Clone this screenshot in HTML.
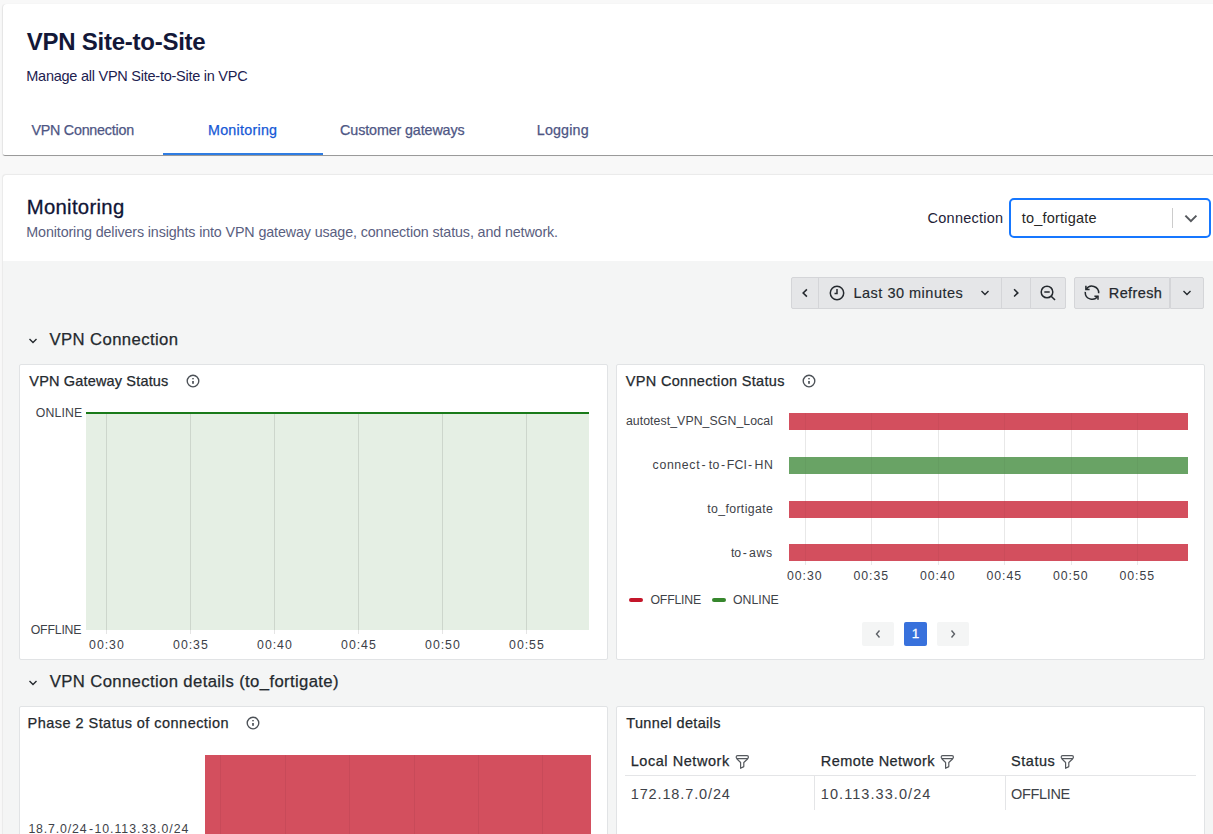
<!DOCTYPE html>
<html>
<head>
<meta charset="utf-8">
<style>
*{box-sizing:border-box;margin:0;padding:0}
html,body{width:1213px;height:834px;overflow:hidden;background:#f8f8f8;font-family:"Liberation Sans",sans-serif}
.a{position:absolute;white-space:nowrap;line-height:1}
#hdr{position:absolute;left:3px;top:4px;width:1220px;height:152px;background:#fff;border-radius:4px 0 0 2px;box-shadow:-1px 0 1px rgba(0,0,0,.08);border-bottom:1px solid #9a9a9a}
#mon{position:absolute;left:3px;top:175px;width:1220px;height:700px;background:#f4f5f5;border-radius:4px 0 0 0;box-shadow:-1px -1px 1px rgba(0,0,0,.06)}
#monhead{position:absolute;left:0;top:0;width:1220px;height:86px;background:#fff;border-radius:4px 0 0 0}
.panel{position:absolute;background:#fff;border:1px solid #e1e3e5;border-radius:2px}
.btn{position:absolute;background:#e5e6e8;border:1px solid #d4d5d8}
</style>
</head>
<body>
<div id="hdr"></div>
<div id="mon"><div id="monhead"></div></div>
<div class="a" style="left:26.7px;top:29.6px;font-size:24px;letter-spacing:-0.247px;color:#131838;font-weight:700;">VPN Site-to-Site</div>
<div class="a" style="left:26.3px;top:68.67px;font-size:14.5px;letter-spacing:-0.252px;color:#1d2150;">Manage all VPN Site-to-Site in VPC</div>
<div class="a" style="left:31.4px;top:122.84px;font-size:14.3px;letter-spacing:-0.231px;color:#4e5684;-webkit-text-stroke:0.25px #4e5684;">VPN Connection</div>
<div class="a" style="left:208.0px;top:122.84px;font-size:14.3px;letter-spacing:0.256px;color:#1558d6;-webkit-text-stroke:0.25px #1558d6;">Monitoring</div>
<div class="a" style="left:340.1px;top:122.84px;font-size:14.3px;letter-spacing:-0.113px;color:#4e5684;-webkit-text-stroke:0.25px #4e5684;">Customer gateways</div>
<div class="a" style="left:536.8px;top:122.84px;font-size:14.3px;letter-spacing:0.15px;color:#4e5684;-webkit-text-stroke:0.25px #4e5684;">Logging</div>
<div class="a" style="left:163px;top:153px;width:160px;height:2px;background:#2f7ce2"></div>
<div class="a" style="left:26.7px;top:196.75px;font-size:20.3px;letter-spacing:0.311px;color:#0f1435;-webkit-text-stroke:0.3px #0f1435;">Monitoring</div>
<div class="a" style="left:26.3px;top:224.84px;font-size:14.3px;letter-spacing:-0.123px;color:#5a6080;">Monitoring delivers insights into VPN gateway usage, connection status, and network.</div>
<div class="a" style="left:927.6px;top:210.68px;font-size:14.5px;letter-spacing:0.244px;color:#1e2238;">Connection</div>
<div class="a" style="left:1009px;top:198px;width:202px;height:40px;border:2px solid #1677ff;border-radius:5px;background:#fff"></div>
<div class="a" style="left:1021.8px;top:210.68px;font-size:14.5px;letter-spacing:0.191px;color:#262626;">to_fortigate</div>
<div class="a" style="left:1172px;top:208px;width:1px;height:20px;background:#cccccc"></div>
<svg class="a" style="left:1183px;top:212px" width="15" height="12" viewBox="0 0 15 12"><polyline points="2.4,3.6 7.9,9.1 13.4,3.6" fill="none" stroke="#55585d" stroke-width="2"/></svg>
<div class="btn" style="left:791px;top:277px;width:28px;height:32px;border-radius:2px 0 0 2px"></div>
<div class="btn" style="left:818px;top:277px;width:184px;height:32px"></div>
<div class="btn" style="left:1001px;top:277px;width:30px;height:32px"></div>
<div class="btn" style="left:1030px;top:277px;width:36px;height:32px;border-radius:0 2px 2px 0"></div>
<div class="btn" style="left:1074px;top:277px;width:96px;height:32px;border-radius:2px 0 0 2px"></div>
<div class="btn" style="left:1170px;top:277px;width:34px;height:32px;border-radius:0 2px 2px 0"></div>
<svg class="a" style="left:799px;top:286px" width="12" height="14" viewBox="0 0 12 14"><polyline points="7.9,3.4 4.2,7 7.9,10.6" fill="none" stroke="#24292e" stroke-width="1.6"/></svg>
<svg class="a" style="left:829px;top:285px" width="16" height="16" viewBox="0 0 16 16"><circle cx="8" cy="8" r="6.7" fill="none" stroke="#24292e" stroke-width="1.5"/><polyline points="8,4 8,8.5 5.5,8.5" fill="none" stroke="#24292e" stroke-width="1.5"/></svg>
<div class="a" style="left:853.5px;top:285.68px;font-size:14.5px;letter-spacing:0.493px;color:#24292e;-webkit-text-stroke:0.15px #24292e;">Last 30 minutes</div>
<svg class="a" style="left:979px;top:287px" width="12" height="12" viewBox="0 0 12 12"><polyline points="2.5,4 6,7.5 9.5,4" fill="none" stroke="#24292e" stroke-width="1.4"/></svg>
<svg class="a" style="left:1010px;top:286px" width="12" height="14" viewBox="0 0 12 14"><polyline points="4.1,3.3 7.8,6.9 4.1,10.5" fill="none" stroke="#24292e" stroke-width="1.6"/></svg>
<svg class="a" style="left:1040px;top:285px" width="17" height="17" viewBox="0 0 17 17"><circle cx="7" cy="7" r="5.8" fill="none" stroke="#24292e" stroke-width="1.5"/><line x1="4.3" y1="7" x2="9.7" y2="7" stroke="#24292e" stroke-width="1.5"/><line x1="11.2" y1="11.2" x2="15" y2="15" stroke="#24292e" stroke-width="1.6"/></svg>
<svg class="a" style="left:1084px;top:284px" width="17" height="17" viewBox="0 0 17 17"><path d="M2.2,5.3 A6.8,6.8 0 0 1 14.7,9.2" fill="none" stroke="#24292e" stroke-width="1.5"/><path d="M1.3,7.9 A6.8,6.8 0 0 0 13.8,12.1" fill="none" stroke="#24292e" stroke-width="1.5"/><polyline points="1.9,1.7 1.9,5.5 5.6,5.5" fill="none" stroke="#24292e" stroke-width="1.5"/><polyline points="10.4,12.25 14,12.25 14,15.8" fill="none" stroke="#24292e" stroke-width="1.5"/></svg>
<div class="a" style="left:1108.8px;top:285.68px;font-size:14.5px;letter-spacing:0.383px;color:#24292e;-webkit-text-stroke:0.25px #24292e;">Refresh</div>
<svg class="a" style="left:1181px;top:287px" width="12" height="12" viewBox="0 0 12 12"><polyline points="2.5,4 6,7.5 9.5,4" fill="none" stroke="#24292e" stroke-width="1.4"/></svg>
<svg class="a" style="left:27px;top:335px" width="12" height="12" viewBox="0 0 12 12"><polyline points="2.5,4 6,7.5 9.5,4" fill="none" stroke="#24292e" stroke-width="1.4"/></svg>
<div class="a" style="left:49.6px;top:332.41px;font-size:16.7px;letter-spacing:0.385px;color:#24292e;-webkit-text-stroke:0.25px #24292e;">VPN Connection</div>
<div class="panel" style="left:19px;top:364px;width:589px;height:296px"></div>
<div class="panel" style="left:616px;top:364px;width:589px;height:296px"></div>
<div class="a" style="left:29.3px;top:374.28px;font-size:14.5px;letter-spacing:0.165px;color:#24292e;-webkit-text-stroke:0.25px #24292e;">VPN Gateway Status</div>
<svg class="a" style="left:186px;top:374px" width="14" height="14" viewBox="0 0 14 14"><circle cx="7" cy="7" r="5.8" fill="none" stroke="#4c5157" stroke-width="1.35"/><rect x="6.15" y="4.1" width="1.7" height="1.2" fill="#4c5157"/><rect x="6.15" y="7" width="1.7" height="2.8" fill="#4c5157"/></svg>
<div class="a" style="left:86px;top:413px;width:503px;height:217px;background:#e5efe4"></div>
<div class="a" style="left:86px;top:412px;width:503px;height:2px;background:#197a19"></div>
<div class="a" style="left:106px;top:414px;width:1px;height:220px;background:rgba(0,0,0,.1)"></div>
<div class="a" style="left:190px;top:414px;width:1px;height:220px;background:rgba(0,0,0,.1)"></div>
<div class="a" style="left:274px;top:414px;width:1px;height:220px;background:rgba(0,0,0,.1)"></div>
<div class="a" style="left:358px;top:414px;width:1px;height:220px;background:rgba(0,0,0,.1)"></div>
<div class="a" style="left:442px;top:414px;width:1px;height:220px;background:rgba(0,0,0,.1)"></div>
<div class="a" style="left:526px;top:414px;width:1px;height:220px;background:rgba(0,0,0,.1)"></div>
<div class="a" style="left:35.8px;top:406.55px;font-size:12.3px;letter-spacing:0.12px;color:#3e4248;">ONLINE</div>
<div class="a" style="left:30.7px;top:623.54px;font-size:12.3px;letter-spacing:-0.183px;color:#3e4248;">OFFLINE</div>
<div class="a" style="left:89.1px;top:638.54px;font-size:12.3px;letter-spacing:0.975px;color:#3b4047">00:30</div>
<div class="a" style="left:173.1px;top:638.54px;font-size:12.3px;letter-spacing:0.975px;color:#3b4047">00:35</div>
<div class="a" style="left:257.1px;top:638.54px;font-size:12.3px;letter-spacing:0.975px;color:#3b4047">00:40</div>
<div class="a" style="left:341.1px;top:638.54px;font-size:12.3px;letter-spacing:0.975px;color:#3b4047">00:45</div>
<div class="a" style="left:425.1px;top:638.54px;font-size:12.3px;letter-spacing:0.975px;color:#3b4047">00:50</div>
<div class="a" style="left:509.1px;top:638.54px;font-size:12.3px;letter-spacing:0.975px;color:#3b4047">00:55</div>
<div class="a" style="left:625.8px;top:374.28px;font-size:14.5px;letter-spacing:0.315px;color:#24292e;-webkit-text-stroke:0.25px #24292e;">VPN Connection Status</div>
<svg class="a" style="left:802px;top:374px" width="14" height="14" viewBox="0 0 14 14"><circle cx="7" cy="7" r="5.8" fill="none" stroke="#4c5157" stroke-width="1.35"/><rect x="6.15" y="4.1" width="1.7" height="1.2" fill="#4c5157"/><rect x="6.15" y="7" width="1.7" height="2.8" fill="#4c5157"/></svg>
<div class="a" style="left:805px;top:413px;width:1px;height:152px;background:rgba(0,0,0,.09)"></div>
<div class="a" style="left:871px;top:413px;width:1px;height:152px;background:rgba(0,0,0,.09)"></div>
<div class="a" style="left:937.5px;top:413px;width:1px;height:152px;background:rgba(0,0,0,.09)"></div>
<div class="a" style="left:1004px;top:413px;width:1px;height:152px;background:rgba(0,0,0,.09)"></div>
<div class="a" style="left:1070.5px;top:413px;width:1px;height:152px;background:rgba(0,0,0,.09)"></div>
<div class="a" style="left:1137px;top:413px;width:1px;height:152px;background:rgba(0,0,0,.09)"></div>
<div class="a" style="left:789px;top:413px;width:399px;height:17px;background:#d34f5e"></div>
<div class="a" style="left:789px;top:457px;width:399px;height:17px;background:#69a365"></div>
<div class="a" style="left:789px;top:501px;width:399px;height:17px;background:#d34f5e"></div>
<div class="a" style="left:789px;top:544px;width:399px;height:17px;background:#d34f5e"></div>
<div class="a" style="left:805px;top:413px;width:1px;height:17px;background:rgba(0,0,0,.035)"></div>
<div class="a" style="left:805px;top:457px;width:1px;height:17px;background:rgba(0,0,0,.035)"></div>
<div class="a" style="left:805px;top:501px;width:1px;height:17px;background:rgba(0,0,0,.035)"></div>
<div class="a" style="left:805px;top:544px;width:1px;height:17px;background:rgba(0,0,0,.035)"></div>
<div class="a" style="left:871px;top:413px;width:1px;height:17px;background:rgba(0,0,0,.035)"></div>
<div class="a" style="left:871px;top:457px;width:1px;height:17px;background:rgba(0,0,0,.035)"></div>
<div class="a" style="left:871px;top:501px;width:1px;height:17px;background:rgba(0,0,0,.035)"></div>
<div class="a" style="left:871px;top:544px;width:1px;height:17px;background:rgba(0,0,0,.035)"></div>
<div class="a" style="left:937.5px;top:413px;width:1px;height:17px;background:rgba(0,0,0,.035)"></div>
<div class="a" style="left:937.5px;top:457px;width:1px;height:17px;background:rgba(0,0,0,.035)"></div>
<div class="a" style="left:937.5px;top:501px;width:1px;height:17px;background:rgba(0,0,0,.035)"></div>
<div class="a" style="left:937.5px;top:544px;width:1px;height:17px;background:rgba(0,0,0,.035)"></div>
<div class="a" style="left:1004px;top:413px;width:1px;height:17px;background:rgba(0,0,0,.035)"></div>
<div class="a" style="left:1004px;top:457px;width:1px;height:17px;background:rgba(0,0,0,.035)"></div>
<div class="a" style="left:1004px;top:501px;width:1px;height:17px;background:rgba(0,0,0,.035)"></div>
<div class="a" style="left:1004px;top:544px;width:1px;height:17px;background:rgba(0,0,0,.035)"></div>
<div class="a" style="left:1070.5px;top:413px;width:1px;height:17px;background:rgba(0,0,0,.035)"></div>
<div class="a" style="left:1070.5px;top:457px;width:1px;height:17px;background:rgba(0,0,0,.035)"></div>
<div class="a" style="left:1070.5px;top:501px;width:1px;height:17px;background:rgba(0,0,0,.035)"></div>
<div class="a" style="left:1070.5px;top:544px;width:1px;height:17px;background:rgba(0,0,0,.035)"></div>
<div class="a" style="left:1137px;top:413px;width:1px;height:17px;background:rgba(0,0,0,.035)"></div>
<div class="a" style="left:1137px;top:457px;width:1px;height:17px;background:rgba(0,0,0,.035)"></div>
<div class="a" style="left:1137px;top:501px;width:1px;height:17px;background:rgba(0,0,0,.035)"></div>
<div class="a" style="left:1137px;top:544px;width:1px;height:17px;background:rgba(0,0,0,.035)"></div>
<div class="a" style="left:625.9px;top:414.65px;font-size:12.3px;letter-spacing:0.071px;color:#3e4248;">autotest_VPN_SGN_Local</div>
<div class="a" style="left:652.6px;top:459.15px;font-size:12.3px;letter-spacing:0.65px;color:#3e4248;">connect</div>
<div class="a" style="left:701.4px;top:459.15px;font-size:12.3px;letter-spacing:0.0px;color:#3e4248;">-</div>
<div class="a" style="left:708.7px;top:459.15px;font-size:12.3px;letter-spacing:0.4px;color:#3e4248;">to</div>
<div class="a" style="left:721.0px;top:459.15px;font-size:12.3px;letter-spacing:0.0px;color:#3e4248;">-</div>
<div class="a" style="left:726.8px;top:459.15px;font-size:12.3px;letter-spacing:0.2px;color:#3e4248;">FCI</div>
<div class="a" style="left:748.0px;top:459.15px;font-size:12.3px;letter-spacing:0.0px;color:#3e4248;">-</div>
<div class="a" style="left:754.5px;top:459.15px;font-size:12.3px;letter-spacing:0.7px;color:#3e4248;">HN</div>
<div class="a" style="left:707.2px;top:503.15px;font-size:12.3px;letter-spacing:0.373px;color:#3e4248;">to_fortigate</div>
<div class="a" style="left:730.9px;top:547.14px;font-size:12.3px;letter-spacing:-0.1px;color:#3e4248;">to</div>
<div class="a" style="left:742.7px;top:547.14px;font-size:12.3px;letter-spacing:0.0px;color:#3e4248;">-</div>
<div class="a" style="left:749.0px;top:547.14px;font-size:12.3px;letter-spacing:0.65px;color:#3e4248;">aws</div>
<div class="a" style="left:787.1px;top:569.54px;font-size:12.3px;letter-spacing:0.925px;color:#3b4047">00:30</div>
<div class="a" style="left:853.6px;top:569.54px;font-size:12.3px;letter-spacing:0.925px;color:#3b4047">00:35</div>
<div class="a" style="left:920.1px;top:569.54px;font-size:12.3px;letter-spacing:0.925px;color:#3b4047">00:40</div>
<div class="a" style="left:986.6px;top:569.54px;font-size:12.3px;letter-spacing:0.925px;color:#3b4047">00:45</div>
<div class="a" style="left:1053.1px;top:569.54px;font-size:12.3px;letter-spacing:0.925px;color:#3b4047">00:50</div>
<div class="a" style="left:1119.6px;top:569.54px;font-size:12.3px;letter-spacing:0.925px;color:#3b4047">00:55</div>
<div class="a" style="left:629px;top:598px;width:14px;height:4px;border-radius:2px;background:#c4162a"></div>
<div class="a" style="left:650.5px;top:593.54px;font-size:12.3px;letter-spacing:-0.217px;color:#3e4248;">OFFLINE</div>
<div class="a" style="left:712px;top:598px;width:14px;height:4px;border-radius:2px;background:#37872d"></div>
<div class="a" style="left:733.0px;top:593.54px;font-size:12.3px;letter-spacing:0.0px;color:#3e4248;">ONLINE</div>
<div class="a" style="left:862px;top:622px;width:32px;height:24px;border-radius:2px;background:#f4f5f5"></div>
<svg class="a" style="left:872px;top:628px" width="12" height="12" viewBox="0 0 12 12"><polyline points="7.5,2.5 4.5,6 7.5,9.5" fill="none" stroke="#5d6167" stroke-width="1.4"/></svg>
<div class="a" style="left:904px;top:622px;width:23px;height:24px;border-radius:2px;background:#3871dc"></div>
<div class="a" style="left:904px;top:622px;width:23px;height:24px;line-height:24px;text-align:center;font-size:13.5px;-webkit-text-stroke:0.3px #fff;color:#fff">1</div>
<div class="a" style="left:937px;top:622px;width:32px;height:24px;border-radius:2px;background:#f4f5f5"></div>
<svg class="a" style="left:947px;top:628px" width="12" height="12" viewBox="0 0 12 12"><polyline points="4.5,2.5 7.5,6 4.5,9.5" fill="none" stroke="#5d6167" stroke-width="1.4"/></svg>
<svg class="a" style="left:27px;top:677px" width="12" height="12" viewBox="0 0 12 12"><polyline points="2.5,4 6,7.5 9.5,4" fill="none" stroke="#24292e" stroke-width="1.4"/></svg>
<div class="a" style="left:49.8px;top:674.4px;font-size:16.7px;letter-spacing:0.369px;color:#24292e;-webkit-text-stroke:0.25px #24292e;">VPN Connection details (to_fortigate)</div>
<div class="panel" style="left:19px;top:706px;width:589px;height:200px"></div>
<div class="panel" style="left:616px;top:706px;width:589px;height:200px"></div>
<div class="a" style="left:27.6px;top:716.27px;font-size:14.5px;letter-spacing:0.459px;color:#24292e;-webkit-text-stroke:0.25px #24292e;">Phase 2 Status of connection</div>
<svg class="a" style="left:246px;top:716px" width="14" height="14" viewBox="0 0 14 14"><circle cx="7" cy="7" r="5.8" fill="none" stroke="#4c5157" stroke-width="1.35"/><rect x="6.15" y="4.1" width="1.7" height="1.2" fill="#4c5157"/><rect x="6.15" y="7" width="1.7" height="2.8" fill="#4c5157"/></svg>
<div class="a" style="left:205px;top:755px;width:386px;height:90px;background:#d34f5e"></div>
<div class="a" style="left:220px;top:755px;width:1px;height:90px;background:rgba(0,0,0,.05)"></div>
<div class="a" style="left:284.5px;top:755px;width:1px;height:90px;background:rgba(0,0,0,.05)"></div>
<div class="a" style="left:349px;top:755px;width:1px;height:90px;background:rgba(0,0,0,.05)"></div>
<div class="a" style="left:413.5px;top:755px;width:1px;height:90px;background:rgba(0,0,0,.05)"></div>
<div class="a" style="left:477.5px;top:755px;width:1px;height:90px;background:rgba(0,0,0,.05)"></div>
<div class="a" style="left:541.5px;top:755px;width:1px;height:90px;background:rgba(0,0,0,.05)"></div>
<div class="a" style="left:28.4px;top:822.54px;font-size:12.3px;letter-spacing:0.862px;color:#3e4248;">18.7.0/24</div>
<div class="a" style="left:89.0px;top:822.54px;font-size:12.3px;letter-spacing:0.0px;color:#3e4248;">-</div>
<div class="a" style="left:94.4px;top:822.54px;font-size:12.3px;letter-spacing:0.985px;color:#3e4248;">10.113.33.0/24</div>
<div class="a" style="left:626.3px;top:716.27px;font-size:14.5px;letter-spacing:0.338px;color:#24292e;-webkit-text-stroke:0.25px #24292e;">Tunnel details</div>
<div class="a" style="left:625px;top:775px;width:571px;height:1px;background:#e4e5e7"></div>
<div class="a" style="left:814px;top:776px;width:1px;height:34px;background:#e4e5e7"></div>
<div class="a" style="left:1005px;top:776px;width:1px;height:34px;background:#e4e5e7"></div>
<div class="a" style="left:630.7px;top:753.67px;font-size:14.5px;letter-spacing:0.55px;color:#24292e;-webkit-text-stroke:0.25px #24292e;">Local Network</div>
<div class="a" style="left:820.8px;top:753.67px;font-size:14.5px;letter-spacing:0.438px;color:#24292e;-webkit-text-stroke:0.25px #24292e;">Remote Network</div>
<div class="a" style="left:1011.0px;top:753.67px;font-size:14.5px;letter-spacing:0.54px;color:#24292e;-webkit-text-stroke:0.25px #24292e;">Status</div>
<svg class="a" style="left:733px;top:753px" width="17" height="17" viewBox="0 0 17 17"><rect x="3.2" y="2.7" width="12.2" height="3" rx="1.4" fill="none" stroke="#55595e" stroke-width="1.2"/><path d="M3.8,5.8 L7.6,9.5 V15.3 L10.8,13.6 V9.5 L14.8,5.8" fill="none" stroke="#55595e" stroke-width="1.2" stroke-linejoin="round"/></svg>
<svg class="a" style="left:938px;top:753px" width="17" height="17" viewBox="0 0 17 17"><rect x="3.2" y="2.7" width="12.2" height="3" rx="1.4" fill="none" stroke="#55595e" stroke-width="1.2"/><path d="M3.8,5.8 L7.6,9.5 V15.3 L10.8,13.6 V9.5 L14.8,5.8" fill="none" stroke="#55595e" stroke-width="1.2" stroke-linejoin="round"/></svg>
<svg class="a" style="left:1058px;top:753px" width="17" height="17" viewBox="0 0 17 17"><rect x="3.2" y="2.7" width="12.2" height="3" rx="1.4" fill="none" stroke="#55595e" stroke-width="1.2"/><path d="M3.8,5.8 L7.6,9.5 V15.3 L10.8,13.6 V9.5 L14.8,5.8" fill="none" stroke="#55595e" stroke-width="1.2" stroke-linejoin="round"/></svg>
<div class="a" style="left:630.7px;top:786.67px;font-size:14.5px;letter-spacing:0.875px;color:#3e4248;">172.18.7.0/24</div>
<div class="a" style="left:820.8px;top:786.67px;font-size:14.5px;letter-spacing:1.069px;color:#3e4248;">10.113.33.0/24</div>
<div class="a" style="left:1011.0px;top:786.67px;font-size:14.5px;letter-spacing:-0.333px;color:#3e4248;">OFFLINE</div>
</body>
</html>
